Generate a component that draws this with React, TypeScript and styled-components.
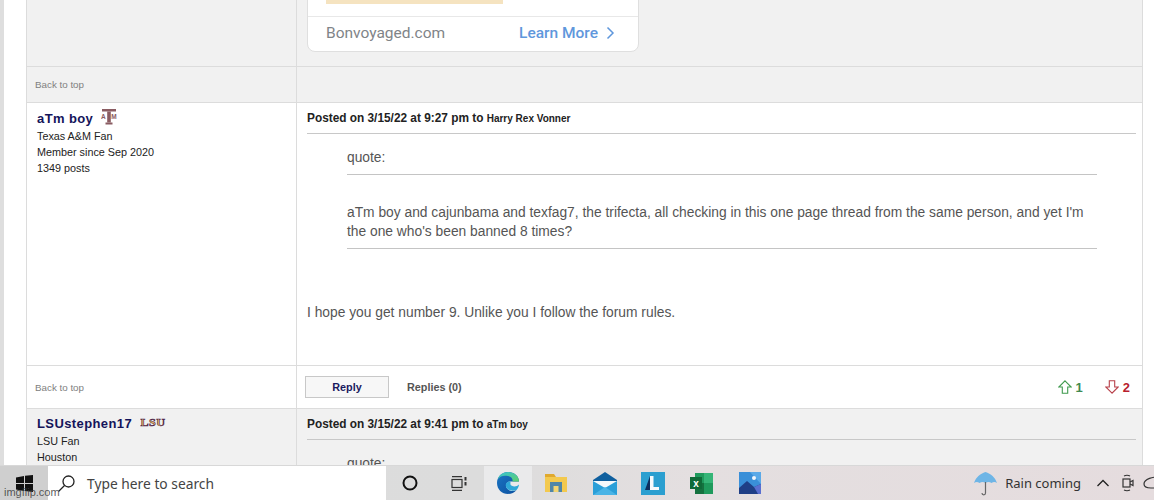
import React from "react";
import styled, { createGlobalStyle } from "styled-components";

const GlobalStyle = createGlobalStyle`
  html, body {
    margin: 0;
    padding: 0;
    height: 500px;
    overflow: hidden;
    background: #fff;
    font-family: "Liberation Sans", Arial, sans-serif;
  }
`;

const App: React.FC = () => {
  return (
    <Screen>
      <GlobalStyle />
      <Page>
        <Forum>
          <Row $height={67} $shade>
            <UserCell />
            <AdCell>
              <AdCard>
                <AdTop>
                  <AdHighlight />
                </AdTop>
                <AdBottom>
                  <AdDomain>Bonvoyaged.com</AdDomain>
                  <AdLink>
                    Learn More
                    <svg width="9" height="14" viewBox="0 0 9 14" fill="none">
                      <path d="M1.500 1.500 7 7l-5.500 5.500" stroke="#5f97dc" strokeWidth="1.500" />
                    </svg>
                  </AdLink>
                </AdBottom>
              </AdCard>
            </AdCell>
          </Row>
          <Row $height={36} $shade>
            <FootLeft>Back to top</FootLeft>
            <MainCell />
          </Row>

          <Row $height={263}>
            <UserCell $top={6}>
              <UserName>
                aTm boy
                <TeamLogo>
                  <AtmLogo />
                </TeamLogo>
              </UserName>
              <UserLine>Texas A&amp;M Fan</UserLine>
              <UserLine>Member since Sep 2020</UserLine>
              <UserLine>1349 posts</UserLine>
            </UserCell>
            <MainCell>
              <PostHeader>
                Posted on 3/15/22 at 9:27 pm to <Recipient>Harry Rex Vonner</Recipient>
              </PostHeader>
              <Quote>
                <QuoteLabel>quote:</QuoteLabel>
                <QuoteText>
                  aTm boy and cajunbama and texfag7, the trifecta, all checking in this one page thread
                  from the same person, and yet I'm the one who's been banned 8 times?
                </QuoteText>
              </Quote>
              <PostBody>I hope you get number 9. Unlike you I follow the forum rules.</PostBody>
            </MainCell>
          </Row>
          <Row $height={43}>
            <FootLeft>Back to top</FootLeft>
            <ActionCell>
              <ReplyButton>Reply</ReplyButton>
              <RepliesLink>Replies (0)</RepliesLink>
              <Votes>
                <Vote $color="#3f8a52">
                  <ArrowIcon color="#3f9a4e" />1
                </Vote>
                <Vote $color="#b8202e">
                  <ArrowIcon color="#b8404a" down />2
                </Vote>
              </Votes>
            </ActionCell>
          </Row>

          <Row $height={57} $shade>
            <UserCell $top={5}>
              <UserName>
                LSUstephen17
                <TeamLogo>
                  <LsuLogo />
                </TeamLogo>
              </UserName>
              <UserLine>LSU Fan</UserLine>
              <UserLine>Houston</UserLine>
            </UserCell>
            <MainCell>
              <PostHeader>
                Posted on 3/15/22 at 9:41 pm to <Recipient>aTm boy</Recipient>
              </PostHeader>
              <Quote>
                <QuoteLabel>quote:</QuoteLabel>
              </Quote>
            </MainCell>
          </Row>
        </Forum>
      </Page>

      <Taskbar>
        <StartButton>
          <svg width="17" height="17" viewBox="0 0 17 17" fill="#111">
            <path d="M0 2.500 8 1v7H0zM9 .8 17 0v8H9zM0 9h8v7L0 14.600zM9 9h8v8l-8-.9z" />
          </svg>
        </StartButton>
        <SearchBox>
          <svg width="19" height="19" viewBox="0 0 19 19" fill="none" stroke="#222" strokeWidth="1.300">
            <circle cx="11.500" cy="7.500" r="5.500" />
            <path d="M7.500 11.500 1.500 17.500" />
          </svg>
          <SearchText>Type here to search</SearchText>
        </SearchBox>
        <TaskIcon $width={48}>
          <svg width="16" height="16" viewBox="0 0 16 16" fill="none" stroke="#111" strokeWidth="2">
            <circle cx="8" cy="8" r="6.500" />
          </svg>
        </TaskIcon>
        <TaskIcon $width={50}>
          <svg width="16" height="15" viewBox="0 0 16 15" fill="none" stroke="#333" strokeWidth="1.200">
            <path d="M1 .6h10M1 14.400h10" />
            <rect x="1" y="3.500" width="10" height="8" />
            <path d="M14.500 1v3.500M14.500 6v3.500" strokeWidth="2" />
          </svg>
        </TaskIcon>
        <TaskIcon $width={48} $active>
          <EdgeIcon />
        </TaskIcon>
        <TaskIcon $width={48}>
          <FolderIcon />
        </TaskIcon>
        <TaskIcon $width={49}>
          <MailIcon />
        </TaskIcon>
        <TaskIcon $width={48}>
          <LensIcon />
        </TaskIcon>
        <TaskIcon $width={48}>
          <ExcelIcon />
        </TaskIcon>
        <TaskIcon $width={49}>
          <PhotosIcon />
        </TaskIcon>
        <Tray>
          <UmbrellaIcon />
          <WeatherText>Rain coming</WeatherText>
          <svg width="14" height="8" viewBox="0 0 14 8" fill="none" stroke="#222" strokeWidth="1.300">
            <path d="M1.500 7 7 1.500 12.500 7" />
          </svg>
          <MeetGlyph>
            <svg width="12" height="18" viewBox="0 0 12 18" fill="none" stroke="#333" strokeWidth="1.200">
              <path d="M2 2c2-1 4-1 6 0M2 16c2 1 4 1 6 0" />
              <rect x="1" y="5" width="7" height="8" />
              <path d="M8 8l3-1.500v5L8 10" />
            </svg>
          </MeetGlyph>
          <svg width="18" height="14" viewBox="0 0 18 14" fill="none" stroke="#333" strokeWidth="1.200">
            <path d="M18 1.500C10 0 1 3 1 8c0 3 3 4 7 4h10" />
          </svg>
        </Tray>
      </Taskbar>
      <Watermark>imgflip.com</Watermark>
    </Screen>
  );
};

const ArrowIcon: React.FC<{ color: string; down?: boolean }> = ({ color, down }) => (
  <svg
    width="14"
    height="14"
    viewBox="0 0 14 14"
    fill="none"
    stroke={color}
    strokeWidth="1.100"
    style={down ? { transform: "rotate(180deg)" } : undefined}
  >
    <path d="M7 .8 13.200 7H9.700v6.300H4.300V7H.8z" />
  </svg>
);

// block T with the small A and M either side of the stem
const AtmLogo = () => (
  <svg width="16" height="16" viewBox="0 0 16 16" fill="#8a5c62" fontFamily="Liberation Sans, sans-serif" fontWeight="700">
    <rect x="1" y="0" width="14" height="2.500" />
    <rect x="6.200" y="2.500" width="3.600" height="11" />
    <rect x="4.500" y="13.500" width="7" height="2" />
    <text x="0" y="10" fontSize="6.500">A</text>
    <text x="10.300" y="10" fontSize="6.500">M</text>
  </svg>
);

const LsuLogo = () => (
  <svg width="26" height="11" viewBox="0 0 26 11">
    <text
      x="13"
      y="9.500"
      fontFamily="Liberation Serif, serif"
      fontWeight="700"
      fontSize="11"
      textAnchor="middle"
      textLength="25"
      lengthAdjust="spacingAndGlyphs"
      fill="#f0bd5c"
      stroke="#4b1f4e"
      strokeWidth="0.600"
    >
      LSU
    </text>
  </svg>
);

const EdgeIcon = () => (
  <svg width="24" height="24" viewBox="0 0 24 24">
    <defs>
      <linearGradient id="edgeBlue" x1="0" y1="0" x2="1" y2="1">
        <stop offset="0" stopColor="#1b76c4" />
        <stop offset="1" stopColor="#0c4f9e" />
      </linearGradient>
      <linearGradient id="edgeGreen" x1="0" y1="0" x2="1" y2="1">
        <stop offset="0" stopColor="#36c1d6" />
        <stop offset="1" stopColor="#5fd06a" />
      </linearGradient>
    </defs>
    <path d="M12 1C5.500 1 1 6 1 12c0 6.500 5 11 11 11 3.500 0 6.500-1.300 8.500-4-5 2.500-10 0-10.500-4-.3-2.500 1.500-4.500 4-4.500H23C23 5 18 1 12 1z" fill="url(#edgeBlue)" />
    <path d="M12 1C7 1 3 4 2 8c2-3 6-4 10-3 4 .8 5 3.500 4.500 5.500H23C23 5 18 1 12 1z" fill="url(#edgeGreen)" />
    <path d="M14 10.500c-3 0-5 2-4 5 .8 3 5 5.500 10.500 3.500 1.500-1.500 2.500-4 2.500-5.500-2.500 3-8 2-8.500 0-.2-1 0-2 0-3z" fill="#2fa8d8" />
  </svg>
);

const FolderIcon = () => (
  <svg width="22" height="18" viewBox="0 0 22 18">
    <path d="M0 0h9l2 3H0z" fill="#e0a92e" />
    <rect y="3" width="22" height="15" fill="#f3c94e" />
    <rect x="5" y="8" width="12" height="10" fill="#4f86a8" />
    <rect x="8.500" y="12" width="5" height="6" fill="#f3d573" />
  </svg>
);

const MailIcon = () => (
  <svg width="24" height="23" viewBox="0 0 24 23">
    <path d="M12 0 24 8v15H0V8z" fill="#0f5f9e" />
    <path d="M0 9h24v14H0z" fill="#2a9fd8" />
    <path d="M0 9h24l-12 7z" fill="#f4f8fb" />
    <path d="M0 23l12-8 12 8z" fill="#49b4e6" />
  </svg>
);

const LensIcon = () => (
  <svg width="24" height="23" viewBox="0 0 24 23">
    <rect width="24" height="23" fill="#2b9fd0" />
    <path d="M9 4v14H4z" fill="#0d2f5f" />
    <path d="M9 4h3.500v11H18v3H9z" fill="#f6fafc" />
  </svg>
);

const ExcelIcon = () => (
  <svg width="23" height="21" viewBox="0 0 23 21">
    <rect x="5" width="18" height="21" fill="#1f9a5c" />
    <rect x="14" width="9" height="10" fill="#35b577" />
    <rect x="5" y="10" width="9" height="11" fill="#15713f" />
    <rect y="4" width="12" height="12" fill="#0f6a38" />
    <text x="6" y="14" fontSize="10" fontWeight="700" fontFamily="Liberation Sans, sans-serif" textAnchor="middle" fill="#fff">
      x
    </text>
  </svg>
);

const PhotosIcon = () => (
  <svg width="22" height="22" viewBox="0 0 22 22">
    <rect width="22" height="22" fill="#3a8fd8" />
    <path d="M11 0h11v12z" fill="#5aa9e8" />
    <circle cx="15" cy="6" r="2" fill="#f2f6fb" />
    <path d="M0 16 8 9l7 6 7-3v10H0z" fill="#1f3f86" />
    <path d="M15 15l7-3v10h-3z" fill="#5a6fd0" />
  </svg>
);

const UmbrellaIcon = () => (
  <svg width="23" height="25" viewBox="0 0 23 25" fill="none">
    <path d="M0 12C2 6 6 3 11.500 1 17 3 21 6 23 12c-2-1.500-3.500-1.500-5.500 0-2-1.500-4-1.500-6 0-2-1.500-4-1.500-6 0C3.500 10.500 2 10.500 0 12z" fill="#6eb5e6" />
    <path d="M11.500 11v11c0 2.500-3.500 2.500-3.500 0" stroke="#666" strokeWidth="1.200" />
  </svg>
);

const Screen = styled.div`
  position: relative;
  display: flex;
  flex-direction: column;
  width: 1154px;
  height: 500px;
  overflow: hidden;
`;

const Page = styled.div`
  height: 465px;
  flex: none;
  overflow: hidden;
  background: #fff;
  border-left: 4px solid #dedede;
  padding-left: 22px;
  box-sizing: border-box;
`;

const Forum = styled.div`
  width: 1117px;
  box-sizing: border-box;
  border-left: 1px solid #dcdcdc;
  border-right: 1px solid #dcdcdc;
`;

const Row = styled.div<{ $height: number; $shade?: boolean }>`
  display: grid;
  grid-template-columns: 270px 1fr;
  height: ${(p) => p.$height}px;
  box-sizing: border-box;
  background: ${(p) => (p.$shade ? "#f1f1f1" : "#fff")};
  border-bottom: 1px solid #dcdcdc;

  &:last-child {
    border-bottom: 0;
  }
`;

const UserCell = styled.div<{ $top?: number }>`
  border-right: 1px solid #dcdcdc;
  padding: ${(p) => p.$top ?? 0}px 0 0 10px;
  overflow: hidden;
`;

const UserName = styled.div`
  display: flex;
  align-items: center;
  height: 18px;
  margin-bottom: 1px;
  font-size: 13px;
  font-weight: 700;
  letter-spacing: 0.4px;
  color: #14145a;
`;

const TeamLogo = styled.span`
  display: inline-flex;
  margin-left: 8px;
  margin-top: -3px;
`;

const UserLine = styled.div`
  font-size: 10.800px;
  line-height: 16px;
  color: #222;
`;

const MainCell = styled.div`
  padding: 0 6px 0 10px;
  overflow: hidden;
`;

const AdCell = styled(MainCell)`
  display: flex;
  align-items: flex-end;
  padding-bottom: 14px;
`;

const AdCard = styled.div`
  width: 332px;
  flex: none;
  box-sizing: border-box;
  background: #fff;
  border: 1px solid #dfdfdf;
  border-radius: 8px;
`;

const AdTop = styled.div`
  height: 50px;
  display: flex;
  align-items: flex-end;
  padding: 0 0 12px 18px;
  box-sizing: border-box;
  border-bottom: 1px solid #e8e8e8;
`;

const AdHighlight = styled.div`
  width: 177px;
  height: 4px;
  background: #f5e3c0;
`;

const AdBottom = styled.div`
  height: 34px;
  display: flex;
  align-items: center;
  justify-content: space-between;
  padding: 0 23px 2px 18px;
  box-sizing: border-box;
`;

const AdDomain = styled.span`
  font-family: "Roboto", sans-serif;
  font-size: 15.500px;
  color: #808488;
`;

const AdLink = styled.span`
  display: flex;
  align-items: center;
  gap: 8px;
  font-family: "Roboto", sans-serif;
  font-size: 15.500px;
  font-weight: 500;
  color: #5f97dc;
`;

const FootLeft = styled.div`
  display: flex;
  align-items: center;
  padding-left: 8px;
  font-size: 9.800px;
  color: #808080;
  border-right: 1px solid #dcdcdc;
`;

const PostHeader = styled.div`
  height: 31px;
  padding-top: 8px;
  box-sizing: border-box;
  border-bottom: 1px solid #c8c8c8;
  font-size: 11.850px;
  font-weight: 700;
  color: #222;
  white-space: nowrap;
`;

const Recipient = styled.span`
  font-size: 10px;
`;

const Quote = styled.div`
  width: 750px;
  margin-left: 40px;
`;

const QuoteLabel = styled.div`
  height: 41px;
  padding-top: 16px;
  box-sizing: border-box;
  border-bottom: 1px solid #c4c4c4;
  font-size: 13.800px;
  color: #555;
`;

const QuoteText = styled.div`
  padding: 28px 0 7px;
  border-bottom: 1px solid #c4c4c4;
  font-size: 13.800px;
  line-height: 19px;
  color: #555;
`;

const PostBody = styled.div`
  margin-top: 56px;
  font-size: 13.800px;
  color: #555;
`;

const ActionCell = styled.div`
  display: flex;
  align-items: center;
  padding: 0 12px 0 8px;
`;

const ReplyButton = styled.button`
  width: 84px;
  height: 22px;
  padding: 0;
  background: #f7f7f7;
  border: 1px solid #c8c8c8;
  font-family: inherit;
  font-size: 10.800px;
  font-weight: 700;
  color: #1a1a5e;
`;

const RepliesLink = styled.span`
  margin-left: 18px;
  font-size: 10.800px;
  font-weight: 700;
  color: #555;
`;

const Votes = styled.div`
  display: flex;
  gap: 22px;
  margin-left: auto;
`;

const Vote = styled.span<{ $color: string }>`
  display: flex;
  align-items: center;
  gap: 4px;
  font-size: 13px;
  font-weight: 700;
  color: ${(p) => p.$color};
`;

const Taskbar = styled.div`
  display: flex;
  height: 35px;
  flex: none;
  align-items: stretch;
  background: linear-gradient(90deg, #dcdddd 0%, #dcdcdc 42%, #e4dfe0 60%, #e5dcde 100%);
  border-top: 1px solid #d8d8d8;
  box-sizing: border-box;
`;

const StartButton = styled.div`
  width: 48px;
  display: flex;
  align-items: center;
  justify-content: center;
  background: #cfcfcf;
`;

const SearchBox = styled.div`
  width: 338px;
  display: flex;
  align-items: center;
  gap: 11px;
  padding-left: 9px;
  box-sizing: border-box;
  background: #fff;
`;

const SearchText = styled.span`
  font-family: "Noto Sans", sans-serif;
  font-size: 13.800px;
  color: #444;
  margin-top: 1px;
`;

const TaskIcon = styled.div<{ $width: number; $active?: boolean }>`
  width: ${(p) => p.$width}px;
  flex: none;
  display: flex;
  align-items: center;
  justify-content: center;
  background: ${(p) => (p.$active ? "#eaeaeb" : "transparent")};
`;

const Tray = styled.div`
  display: flex;
  align-items: center;
  margin-left: auto;
  gap: 8px;
  margin-right: -7px;
`;

const WeatherText = styled.span`
  font-family: "Noto Sans", sans-serif;
  font-size: 13px;
  color: #333;
  margin-right: 7px;
`;

const MeetGlyph = styled.span`
  display: inline-flex;
  margin-left: 4px;
  margin-right: 1px;
`;

const Watermark = styled.span`
  position: absolute;
  left: 4px;
  bottom: 2px;
  font-size: 11px;
  color: rgba(60, 60, 60, 0.85);
`;

export default App;
